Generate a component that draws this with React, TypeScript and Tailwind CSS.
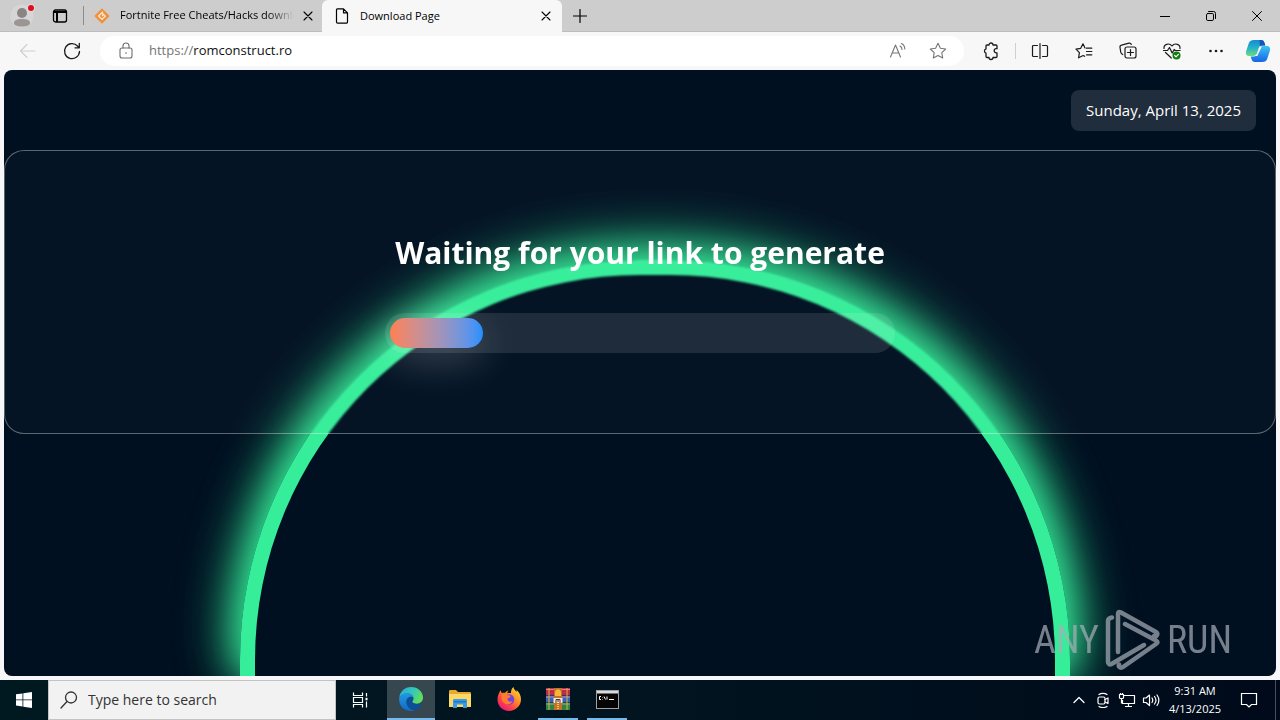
import type { ReactNode } from "react";

const UI = "font-['Open_Sans','Noto_Sans',sans-serif]";

function Icon({ size = 20, width = 1.1, children }: { size?: number; width?: number; children: ReactNode }) {
  return (
    <svg width={size} height={size} viewBox={`0 0 ${size} ${size}`} fill="none" stroke="currentColor" strokeWidth={width} strokeLinecap="round" strokeLinejoin="round" aria-hidden="true" className="shrink-0">
      {children}
    </svg>
  );
}

function ToolButton({ label, className = "text-[#1b1b1b]", children }: { label: string; className?: string; children: ReactNode }) {
  return (
    <button aria-label={label} className={`flex h-8 w-11 shrink-0 items-center justify-center ${className}`}>
      {children}
    </button>
  );
}

function CloseIcon() {
  return (
    <Icon size={10} width={1.1}>
      <path d="M1 1l8 8M9 1L1 9" />
    </Icon>
  );
}

function TabStrip() {
  return (
    <div className="flex h-8 items-stretch border-b border-[#bdbdbd] bg-[#cdcdcd] text-black">
      <button aria-label="Profile" className="flex w-11 items-center justify-center">
        <svg width="26" height="24" viewBox="0 0 26 24" aria-hidden="true">
          <circle cx="13" cy="12" r="11.5" fill="#d6d6d6" />
          <circle cx="13" cy="9" r="5" fill="#8a8583" />
          <path d="M5 19c0-3 3-4 8-4s8 1 8 4c0 2-3 3.500-8 3.500S5 21 5 19z" fill="#9b9693" />
          <circle cx="22" cy="4" r="4" fill="#dcdcdc" />
          <circle cx="22" cy="4" r="3" fill="#e00b1c" />
        </svg>
      </button>
      <button aria-label="Tab actions menu" className="flex w-8 items-center justify-center">
        <Icon size={16} width={1.3}>
          <rect x="1.500" y="2" width="13" height="12" rx="2" />
          <path d="M1.500 4h13M5 5v9" strokeWidth="2" strokeLinecap="butt" />
        </Icon>
      </button>
      <div className="my-1.5 ml-[7px] w-px bg-[#8c8c8c]" />
      <div className="flex w-[238px] items-center pr-1 pl-2.5">
        <svg width="16" height="16" viewBox="0 0 16 16" aria-hidden="true" className="shrink-0">
          <path d="M8 .3L15.700 8 8 15.700.3 8z" fill="#f0913c" />
          <path d="M8.800 3.800L4.600 8 8 11.400 11.200 8.200 9.300 6.300M8.600 4v4.300" fill="none" stroke="#fbe5cf" strokeWidth="1.300" />
        </svg>
        <span className="ml-2.5 min-w-0 flex-1 overflow-hidden text-[11px] whitespace-nowrap [mask-image:linear-gradient(to_right,black_85%,transparent)]">Fortnite Free Cheats/Hacks download</span>
        <button aria-label="Close Fortnite tab" className="ml-1 flex size-5 items-center justify-center">
          <CloseIcon />
        </button>
      </div>
      <div className="-mb-px flex w-60 items-center rounded-t-md bg-[#f7f7f7] pr-1.5 pl-3">
        <Icon size={16} width={1.2}>
          <path d="M2.500 2A1 1 0 0 1 3.500.8h6l4 4V14a1.200 1.200 0 0 1-1.200 1.200H3.700A1.200 1.200 0 0 1 2.500 14zM9.500.8v4h4" />
        </Icon>
        <span className="ml-2.5 flex-1 text-[11px]">Download Page</span>
        <button aria-label="Close Download Page tab" className="flex size-5 items-center justify-center">
          <CloseIcon />
        </button>
      </div>
      <button aria-label="New tab" className="flex w-[35px] items-center justify-center">
        <Icon size={14} width={1.2}>
          <path d="M.5 7h13M7 .5v13" />
        </Icon>
      </button>
      <div className="flex-1" />
      <button aria-label="Minimize" className="flex w-[46px] items-center justify-center">
        <Icon size={10} width={1}>
          <path d="M0 5.500h10" />
        </Icon>
      </button>
      <button aria-label="Restore" className="flex w-[46px] items-center justify-center">
        <Icon size={10} width={1}>
          <rect x=".5" y="2.500" width="7" height="7" rx="1.300" />
          <path d="M2.500.500H7.500a2 2 0 0 1 2 2V7.500" />
        </Icon>
      </button>
      <button aria-label="Close window" className="flex w-[46px] items-center justify-center">
        <Icon size={10} width={1}>
          <path d="M.5.500l9 9M9.500.500l-9 9" />
        </Icon>
      </button>
    </div>
  );
}

function Toolbar() {
  return (
    <div className="flex h-[38px] items-center bg-[#f7f7f7] pr-0.5 pl-1.5">
      <ToolButton label="Back" className="text-[#cfcfcf]">
        <Icon>
          <path d="M17 10H3M9 3.500L2.500 10 9 16.500" />
        </Icon>
      </ToolButton>
      <ToolButton label="Refresh">
        <Icon width={1.3}>
          <path d="M17.500 10.500A7.500 7.500 0 1 1 15.500 5l1.500 1.500M17.300 2.500v4.300h-4.300" />
        </Icon>
      </ToolButton>
      <div className="ml-1.5 flex h-[30px] flex-1 items-center rounded-full bg-white pr-1.5 pl-4">
        <span className="text-[#6e6e6e]">
          <Icon>
            <rect x="4" y="7" width="12" height="10" rx="2" />
            <path d="M7 7V5a3 3 0 0 1 6 0v2" />
            <circle cx="10" cy="12" r=".8" fill="currentColor" stroke="none" />
          </Icon>
        </span>
        <label htmlFor="address" className="ml-[13px] text-[13px] text-[#757575]">
          https://
        </label>
        <input id="address" aria-label="Address and search bar" defaultValue="romconstruct.ro" className="min-w-0 flex-1 bg-transparent text-[13px] text-[#111] outline-none" />
        <button aria-label="Read aloud" className="flex w-10 items-center justify-center text-[#767676]">
          <Icon>
            <path d="M2.500 16L7.500 4l5 12M4.200 12h6.600M12 5c1.500.8 2 2 2 3.500M13.500 2.500c2.300 1.200 3.300 3 3.300 5.500" />
          </Icon>
        </button>
        <button aria-label="Add to favorites" className="flex w-10 items-center justify-center text-[#767676]">
          <Icon>
            <path d="M10 2.300l2.400 4.900 5.300.8-3.900 3.700.9 5.300-4.700-2.500L5.300 17l.9-5.300L2.300 8l5.300-.8z" />
          </Icon>
        </button>
      </div>
      <div className="w-[5px]" />
      <ToolButton label="Extensions">
        <Icon width={1.3}>
          <path d="M6 4h2a2 2 0 0 1 4 0h3a1 1 0 0 1 1 1v2.700h-.7a2.100 2.100 0 0 0 0 4.200h.7V15.500a1 1 0 0 1-1 1H12a2 2 0 0 1-4 0H6a1 1 0 0 1-1-1v-3.400a2.200 2.200 0 0 1 0-4.200V5a1 1 0 0 1 1-1z" />
        </Icon>
      </ToolButton>
      <div className="mx-0.5 h-4 w-px bg-[#cfcfcf]" />
      <ToolButton label="Split screen">
        <Icon width={1.2}>
          <path d="M7.500 4.500h-4a1 1 0 0 0-1 1v9a1 1 0 0 0 1 1h4M12.500 4.500h4a1 1 0 0 1 1 1v9a1 1 0 0 1-1 1h-4M10 2.500v15" />
        </Icon>
      </ToolButton>
      <ToolButton label="Favorites">
        <Icon width={1.2}>
          <path d="M12.500 7.200h5.300M12.500 10.500h5.300M12.500 13.800h5.300M11 7L9 2.800 6.700 7.300l-4.700.8 3.400 3.500-.8 5.200 4.600-2.300 1.500.8" />
        </Icon>
      </ToolButton>
      <ToolButton label="Collections">
        <Icon width={1.2}>
          <rect x="7" y="6" width="11" height="11" rx="2" />
          <path d="M12.500 8.500v6M9.500 11.500h6M4.800 13.500l-1-.7a3 3 0 0 1-1-1.500L2 6.500a2 2 0 0 1 1.500-2.300l7.500-2a2 2 0 0 1 2.300 1.300" />
        </Icon>
      </ToolButton>
      <ToolButton label="Browser essentials">
        <Icon width={1.2}>
          <path d="M2 7.500C1.500 3.500 7 1.200 10 5c3-3.800 8.500-1.500 8 2.500M3.500 11.500L9.300 17M1.500 9.500h4l2-3 2.700 5.500 2-3.500 1 1h5" />
          <circle cx="14.500" cy="14.500" r="4" fill="#107c10" stroke="none" />
          <path d="M12.700 14.500l1.300 1.300 2.400-2.400" stroke="white" />
        </Icon>
      </ToolButton>
      <ToolButton label="Settings and more">
        <Icon>
          <g fill="currentColor" stroke="none">
            <circle cx="4.500" cy="10" r="1.300" />
            <circle cx="10" cy="10" r="1.300" />
            <circle cx="15.500" cy="10" r="1.300" />
          </g>
        </Icon>
      </ToolButton>
      <button aria-label="Copilot" className="flex w-10 shrink-0 items-center justify-center">
        <svg width="26" height="24" viewBox="0 0 26 24" aria-hidden="true">
          <defs>
            <linearGradient id="cpA" x1="0" y1="0" x2="0" y2="1">
              <stop offset="0" stopColor="#1689d8" />
              <stop offset=".5" stopColor="#25b3c8" />
              <stop offset="1" stopColor="#6edc7e" />
            </linearGradient>
            <linearGradient id="cpB" x1="0" y1="0" x2="0" y2="1">
              <stop offset="0" stopColor="#3ec3f5" />
              <stop offset="1" stopColor="#1565e6" />
            </linearGradient>
          </defs>
          <path d="M9 1h7c2 0 3 1.300 3.500 3l.8 2.500h-3c-2 0-3 1-3.700 3l-1.400 4.500C11.600 16 10.500 17 8.500 17H4C1 17 .5 14.500 1.200 12L3.500 5C4.500 2 6 1 9 1z" fill="url(#cpA)" />
          <path d="M17 23h-7c-2 0-3-1.300-3.500-3l-.8-2.500h3c2 0 3-1 3.700-3l1.400-4.500C14.400 8 15.500 7 17.500 7H22c3 0 3.500 2.500 2.800 5l-2.300 7c-1 3-2.500 4-5.500 4z" fill="url(#cpB)" />
          <path d="M14.500 1H16c2 0 3 1.300 3.500 3l.8 2.500h-3c-1 0-1.800.3-2.400.9z" fill="#1557b8" />
          <path d="M14.500 7.500h2.300L12.300 17H9.500c1.500-.5 2.300-1.500 2.900-3.200z" fill="#f7f7f7" />
        </svg>
      </button>
    </div>
  );
}

function Watermark() {
  return (
    <div className="pointer-events-none absolute right-11 bottom-1 flex h-16 items-center gap-1.5 text-[#a9afb8] opacity-70">
      <span className="font-['Roboto_Condensed','Liberation_Sans_Narrow','Roboto',sans-serif] text-[38px] leading-none">ANY</span>
      <svg width="56" height="62" viewBox="0 0 56 62" fill="none" stroke="currentColor" strokeWidth="4.500" strokeLinejoin="round" strokeLinecap="round" aria-hidden="true">
        <path d="M7 8.500C4 9 3 10 3 12v41c0 2 1.500 3 3.500 2L39 36" />
        <path d="M13 43V5c0-2 1-2.500 3-1.500L51 23c2.500 1.500 1 5-2 4M20 15l31 16.500c2 1 2 2.500 0 3.500L18 58c-2 1.500-5 0-4-2.500" />
      </svg>
      <span className="font-['Roboto_Condensed','Liberation_Sans_Narrow','Roboto',sans-serif] text-[38px] leading-none">RUN</span>
    </div>
  );
}

function DownloadPage() {
  const progress = 18.6;
  return (
    <main className="relative isolate mx-1 mb-1 flex flex-1 flex-col overflow-hidden rounded-lg bg-[#001021] text-white">
      <div className="absolute top-[190px] bottom-0 left-1/2 -z-10 -ml-[400px] w-[830px] rounded-t-[400px] border-[15px] border-b-0 border-[#36ee9a] shadow-[0_-8px_60px_#36ee9a,0_0_40px_#36ee9a,0_0_80px_rgba(54,238,154,0.15)]" />
      <div className="flex justify-end px-5 pt-5">
        <time dateTime="2025-04-13" className="rounded-lg bg-white/12 px-[15px] py-2.5 text-[15px] leading-[21px]">
          Sunday, April 13, 2025
        </time>
      </div>
      <section className="mt-[19px] flex flex-col items-center rounded-[20px] border border-white/35 bg-white/[0.02] py-20 backdrop-blur-[1px]">
        <h1 className="text-[30px] leading-[44px] font-bold">Waiting for your link to generate</h1>
        <div role="progressbar" aria-label="Link generation" aria-valuenow={progress} className="mt-[38px] w-[510px] rounded-full bg-white/10 p-[5px]">
          <div className="h-[30px] rounded-full bg-gradient-to-r from-[#ff7f50] to-[#1e90ff] shadow-[0_10px_40px_rgba(255,255,255,0.25)]" style={{ width: `${progress}%` }} />
        </div>
      </section>
      <Watermark />
    </main>
  );
}

function TaskItem({ label, active, running, children }: { label: string; active?: boolean; running?: boolean; children: ReactNode }) {
  return (
    <button aria-label={label} className={`flex w-12 flex-col items-center ${active ? "bg-[#36474f]" : ""}`}>
      <span className="flex flex-1 items-center justify-center">{children}</span>
      <span className={`h-0.5 ${active ? "w-12 bg-[#76b9ed]" : running ? "w-10 bg-[#76b9ed]" : "w-10"}`} />
    </button>
  );
}

function Taskbar() {
  return (
    <footer className="flex h-10 items-stretch bg-gradient-to-r from-[#001820] via-[#011420] to-[#000a1a] text-white">
      <button aria-label="Start" className="flex w-12 items-center justify-center">
        <svg width="16" height="16" viewBox="0 0 16 16" fill="white" aria-hidden="true">
          <path d="M0 2.300L6.500 1.400V7.500H0zM7.300 1.300L16 0v7.500H7.300zM0 8.300h6.500v6.200L0 13.600zM7.300 8.300H16V16l-8.700-1.300z" />
        </svg>
      </button>
      <div className="flex w-72 items-center border border-[#c4c4c4] bg-[#f2f2f2] pl-[11px] text-[#333]">
        <Icon size={18} width={1.3}>
          <circle cx="11" cy="6.500" r="5.500" />
          <path d="M7 10.500L1 17" />
        </Icon>
        <input aria-label="Search" placeholder="Type here to search" className="ml-2.5 min-w-0 flex-1 bg-transparent text-sm outline-none placeholder:text-[#333]" />
      </div>
      <button aria-label="Task view" className="mr-[3px] flex w-12 items-center justify-center">
        <Icon size={18} width={1.2}>
          <path d="M2.500 1.500v3h9v-3M2.500 16.500v-3h9v3M2.500 6.500h9v5h-9zM15.500 2v3.500M15.500 10.500v6" strokeLinecap="butt" strokeLinejoin="miter" />
          <rect x="14.500" y="6.800" width="2" height="2.500" fill="currentColor" stroke="none" />
        </Icon>
      </button>
      <div className="flex gap-px">
        <TaskItem label="Microsoft Edge" active>
          <svg width="24" height="24" viewBox="0 0 24 24" aria-hidden="true">
            <defs>
              <linearGradient id="edA" x1="0" y1="0" x2="1" y2=".4">
                <stop offset="0" stopColor="#2aa9e0" />
                <stop offset=".6" stopColor="#35c8b8" />
                <stop offset="1" stopColor="#5fdc60" />
              </linearGradient>
              <linearGradient id="edB" x1="0" y1="0" x2="0" y2="1">
                <stop offset="0" stopColor="#1f9be0" />
                <stop offset="1" stopColor="#1168c8" />
              </linearGradient>
            </defs>
            <path d="M.2 11C.8 4.500 6 0 12 0c7 0 12 5 12 10.500 0 4-3 6.200-6.300 6.200-3.200 0-4.500-1.300-4.500-2 0-.8 1.300-1 1.300-3.200C14.500 8.500 12 6.500 8.500 6.500 4.500 6.500 1 8.500.2 11z" fill="url(#edA)" />
            <path d="M.1 12.500C0 9 3.500 6.300 8 6.300c3.600 0 6.300 2 6.500 4.800-.6-1-1.500-1.400-2.500-1.400-2.500 0-4.500 2.300-4.500 5.300 0 4.500 4 8.200 8.500 8.200-1.200.5-2.500.8-4 .8C5 24 .2 19 .1 12.500z" fill="url(#edB)" />
            <path d="M7.500 14.500c0-3 2-4.800 4.500-4.800.8 0 1.500.3 2 .8.500 2.500-.8 3-.8 4.200 0 1 1.700 2.300 4.800 2.300 1.900 0 3.300-.5 4.300-1.100.5-.2.800.100.6.5C21.500 20 18.500 23 15.500 23.200c-4.500-.2-8-4-8-8.700z" fill="#0c4f96" />
          </svg>
        </TaskItem>
        <TaskItem label="File Explorer">
          <svg width="22" height="20" viewBox="0 0 22 20" aria-hidden="true">
            <path d="M0 2.500C0 1.500.5 1 1.500 1H7l2 2h11.500c1 0 1.500.5 1.500 1.500V18H0z" fill="#e9a92c" />
            <path d="M0 5h22v13H0z" fill="#fcd866" />
            <path d="M4 19v-7.500c0-1 .5-1.500 1.500-1.500h11c1 0 1.500.5 1.500 1.500V19h-4v-3.500H8V19z" fill="#3a9be0" />
            <path d="M5 12h12v1.500H5z" fill="#1c78c4" />
          </svg>
        </TaskItem>
        <TaskItem label="Firefox">
          <svg width="24" height="24" viewBox="0 0 24 24" aria-hidden="true">
            <defs>
              <linearGradient id="ffA" x1="1" y1="0" x2="0.200" y2="1">
                <stop offset="0" stopColor="#ffe83b" />
                <stop offset=".4" stopColor="#ff9524" />
                <stop offset=".75" stopColor="#ff3b4b" />
                <stop offset="1" stopColor="#e31587" />
              </linearGradient>
            </defs>
            <path d="M3.500 3c.2 1.300.7 2.200 1.500 3 .8-.3 2-.4 3-.2C9 4.500 10.300 3.700 11.500 3.500 10.700 4.300 10.300 5 10.300 6H14c0-2.500.4-4.500 2.500-6 .3 2.300 1.700 3.300 3.200 5-.1-.7-.2-1.300-.1-2C22.500 5.500 24 9 24 12.300 24 19 18.500 24 12 24S.5 19 .5 12.500C.5 8.500 2 6 3.500 3z" fill="url(#ffA)" />
            <circle cx="12" cy="12.500" r="5.300" fill="#7542e5" />
            <path d="M4.500 8c2-1.500 4.500-1 6 .2 1.500 0 3 .3 3 1.200 0 1-1.700 1.500-3 2-.5 3 2.500 4 5 2.600-1.500 4-6.500 4.500-9 1.500C4.800 13.500 4.300 11 4.500 8z" fill="#ff7d2d" />
          </svg>
        </TaskItem>
        <TaskItem label="WinRAR" running>
          <svg width="24" height="22" viewBox="0 0 24 22" aria-hidden="true">
            <path d="M0 0h24v7H0z" fill="#c02a45" />
            <path d="M0 7.500h24v6.500H0z" fill="#3c62b8" />
            <path d="M0 14.500h24V22H0z" fill="#2c8543" />
            <path d="M0 1.500h24M0 9h24M0 16h24" stroke="#e6a0a0" strokeWidth=".8" />
            <path d="M3 0v22M21 0v22" stroke="#d9b14a" strokeWidth="1" />
            <path d="M8 0h8v22H8z" fill="#c4712c" />
            <path d="M9 5c0-5 6-5 6 0v3H9z" fill="#f6b63a" />
            <path d="M7.500 10h9v5h-9z" fill="#f2e9dc" />
            <path d="M10 15v-3.500h4V15M12 11.500V14" stroke="#5b3418" fill="none" />
            <path d="M12 16v6" stroke="#f6c253" strokeWidth="2" strokeDasharray="1 1" />
          </svg>
        </TaskItem>
        <TaskItem label="Command Prompt" running>
          <svg width="23" height="19" viewBox="0 0 23 19" aria-hidden="true">
            <rect x=".5" y=".5" width="22" height="18" fill="#050505" stroke="#9aa0a3" />
            <path d="M1 1h21v2.500H1z" fill="#dadada" />
            <path d="M5 6.500H3.500v3H5M6.500 7v.5M6.500 9v.5M8 6.500L9.500 9.500M11 6.500v3M13 9.500h5" stroke="white" fill="none" />
          </svg>
        </TaskItem>
      </div>
      <div className="flex-1" />
      <button aria-label="Show hidden icons" className="flex w-6 items-center justify-center">
        <Icon size={12} width={1.3}>
          <path d="M1 8.500l5-5 5 5" />
        </Icon>
      </button>
      <button aria-label="Meet now" className="flex w-6 items-center justify-center">
        <Icon size={16} width={1.2}>
          <rect x="3" y="5" width="7" height="7" rx="1.500" />
          <path d="M10 7.500l3-1.500v5.500l-3-1.500M4 2.500c2-1.500 6-1.500 8 0M4 14.500c2 1.300 6 1.300 8 0" />
        </Icon>
      </button>
      <button aria-label="Network" className="flex w-6 items-center justify-center">
        <Icon size={18} width={1.2}>
          <path d="M6 4.500h10.500v8H4.500V9M10.500 12.500v3M7 15.500h7M1.500 3.500v3a1 1 0 0 0 1 1h2a1 1 0 0 0 1-1v-3zM3.500 7.500v5M2.500 2v1.500M4.500 2v1.500" strokeLinecap="butt" />
        </Icon>
      </button>
      <button aria-label="Volume" className="flex w-6 items-center justify-center">
        <Icon size={18} width={1.2}>
          <path d="M1.500 7v4.500H4l3.500 3V4L4 7zM10 7c1 1.500 1 3 0 4.500M12.500 5.500c2 2.500 2 5 0 7.500M15 4c2.500 3.500 2.500 7 0 10.500" />
        </Icon>
      </button>
      <button className="w-16 text-center text-[11px] leading-[18px]">
        9:31 AM
        <br />
        4/13/2025
      </button>
      <button aria-label="Notifications" className="flex w-11 items-center justify-center">
        <Icon size={18} width={1.2}>
          <path d="M1.500 2.500h15V13.500h-5L9 16l-2.500-2.500h-5z" strokeLinejoin="miter" />
        </Icon>
      </button>
      <div className="ml-1 w-[5px] border-l border-[#46505c]" />
    </footer>
  );
}

export default function App() {
  return (
    <div className={`flex min-h-screen flex-col bg-[#f7f7f9] ${UI}`}>
      <TabStrip />
      <Toolbar />
      <DownloadPage />
      <Taskbar />
    </div>
  );
}
